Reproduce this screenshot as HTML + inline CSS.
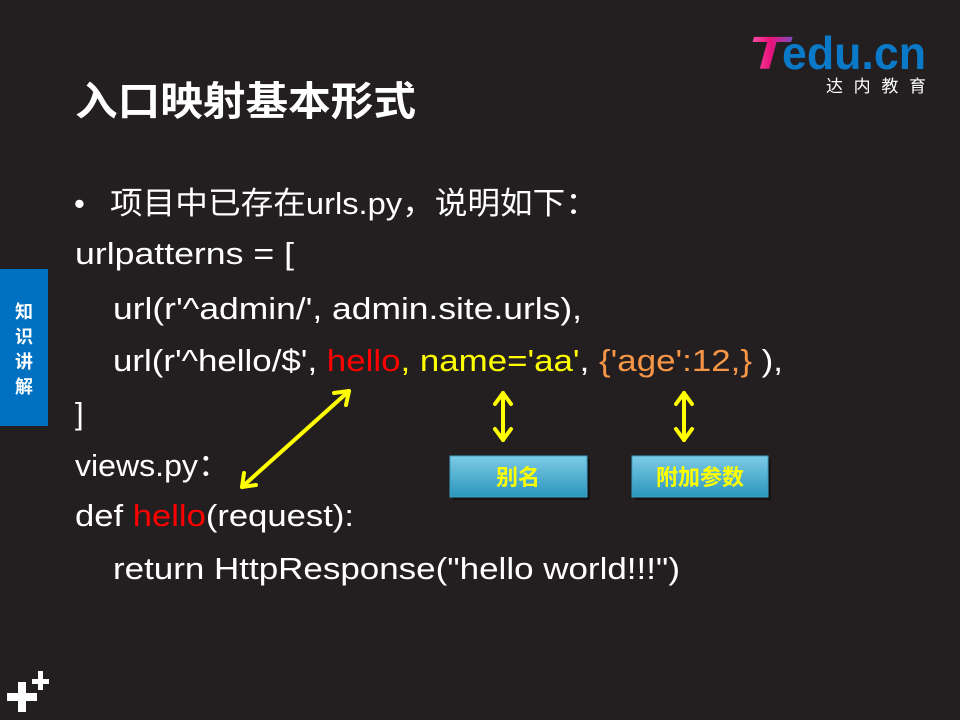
<!DOCTYPE html>
<html><head><meta charset="utf-8"><style>
html,body{margin:0;padding:0;background:#231f20;}
svg{display:block}
text{font-family:"Liberation Sans","Noto Sans CJK SC",sans-serif;}
</style></head><body>
<svg width="960" height="720" viewBox="0 0 960 720" xmlns="http://www.w3.org/2000/svg">
<defs>
<linearGradient id="bx" x1="0" y1="0" x2="0" y2="1"><stop offset="0" stop-color="#7ecbe6"/><stop offset="1" stop-color="#2a95bb"/></linearGradient>
<linearGradient id="tg" x1="0" y1="0" x2="1" y2="0"><stop offset="0" stop-color="#ff5ab0"/><stop offset="0.5" stop-color="#e8127a"/><stop offset="1" stop-color="#7a4fc0"/></linearGradient>
</defs>
<rect width="960" height="720" fill="#231f20"/>
<!-- logo -->
<text x="748" y="69" font-size="46" font-weight="bold" font-style="italic" fill="url(#tg)" textLength="40" lengthAdjust="spacingAndGlyphs">T</text>
<text x="782" y="69" font-size="46" font-weight="bold" fill="#0a7ac8" textLength="144" lengthAdjust="spacingAndGlyphs">edu.cn</text>
<text x="826" y="92" font-size="17" fill="#fff" textLength="100" lengthAdjust="spacing">达内教育</text>
<!-- title -->
<text x="75" y="115" font-size="40" font-weight="bold" fill="#fff" textLength="341" lengthAdjust="spacingAndGlyphs">入口映射基本形式</text>
<!-- side tab -->
<rect x="0" y="269" width="48" height="157" fill="#0070c0"/>
<g font-size="18" font-weight="bold" fill="#fff" text-anchor="middle">
<text x="24" y="318">知</text><text x="24" y="343">识</text><text x="24" y="368">讲</text><text x="24" y="393">解</text>
</g>
<!-- body -->
<g font-size="31" fill="#fff">
<text x="74" y="214">•</text>
<text x="110" y="214" textLength="488" lengthAdjust="spacingAndGlyphs">项目中已存在urls.py，说明如下：</text>
<text x="75" y="264" textLength="219" lengthAdjust="spacingAndGlyphs">urlpatterns = [</text>
<text x="113" y="319" textLength="469" lengthAdjust="spacingAndGlyphs">url(r'^admin/', admin.site.urls),</text>
<text x="113" y="371" textLength="670" lengthAdjust="spacingAndGlyphs">url(r'^hello/$', <tspan fill="#ff0000">hello</tspan><tspan fill="#ffff00">, name='aa'</tspan>, <tspan fill="#f79646">{'age':12,}</tspan> ),</text>
<text x="75" y="424">]</text>
<text x="75" y="476" textLength="155" lengthAdjust="spacingAndGlyphs">views.py：</text>
<text x="75" y="526" textLength="279" lengthAdjust="spacingAndGlyphs">def <tspan fill="#ff0000">hello</tspan>(request):</text>
<text x="113" y="579" textLength="567" lengthAdjust="spacingAndGlyphs">return HttpResponse("hello world!!!")</text>
</g>
<!-- arrows -->
<g stroke="#ffff00" stroke-width="4" fill="none" stroke-linecap="round" stroke-linejoin="round">
<line x1="242" y1="487" x2="349" y2="391"/>
<polyline points="334,393 349,391 346,405"/>
<polyline points="244,473 242,487 256,485"/>
<line x1="503" y1="393" x2="503" y2="440"/>
<polyline points="495,404 503,393 511,404"/>
<polyline points="495,429 503,440 511,429"/>
<line x1="684" y1="393" x2="684" y2="440"/>
<polyline points="676,404 684,393 692,404"/>
<polyline points="676,429 684,440 692,429"/>
</g>
<!-- boxes -->
<rect x="453" y="459" width="137" height="41" fill="#000" opacity="0.4"/>
<rect x="450" y="456" width="137" height="41" fill="url(#bx)" stroke="#3aa0c8"/>
<rect x="635" y="459" width="136" height="41" fill="#000" opacity="0.4"/>
<rect x="632" y="456" width="136" height="41" fill="url(#bx)" stroke="#3aa0c8"/>
<g font-size="22" font-weight="bold" fill="#ffff00" text-anchor="middle">
<text x="518" y="485">别名</text>
<text x="700" y="485">附加参数</text>
</g>
<!-- plus marks -->
<g fill="#fff">
<rect x="7" y="693" width="30" height="8"/><rect x="18" y="682" width="8" height="30"/>
<rect x="32" y="679" width="17" height="5"/><rect x="38" y="671" width="5" height="19"/>
</g>
</svg>
</body></html>
